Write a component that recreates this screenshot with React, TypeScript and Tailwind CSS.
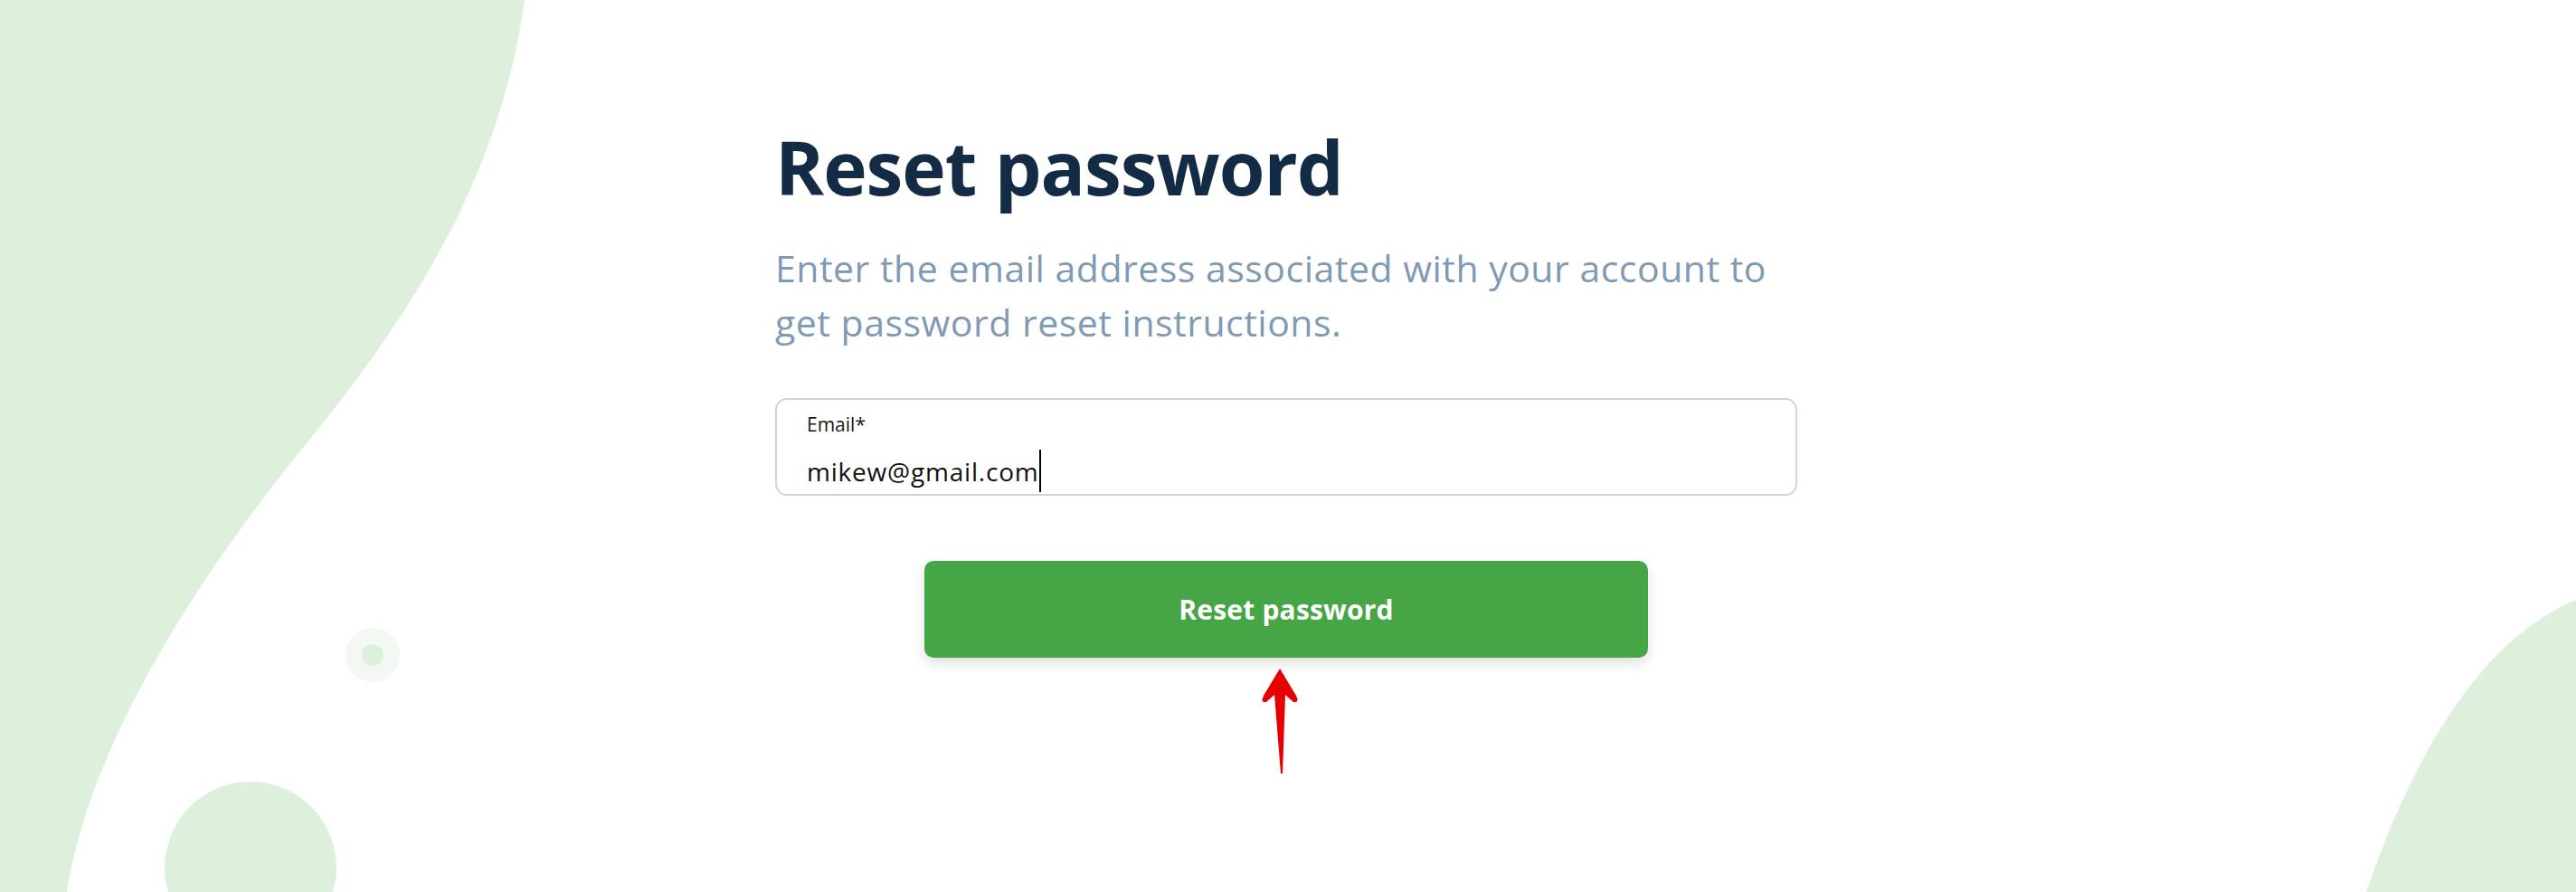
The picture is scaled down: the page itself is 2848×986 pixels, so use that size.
import React from "react";

export default function App() {
  return (
    <div className="relative w-full h-[986px] overflow-hidden bg-white" style={{ fontFamily: "'Open Sans', Lato, sans-serif" }}>
      <svg className="absolute inset-0 w-full h-full" viewBox="0 0 2848 986" preserveAspectRatio="none">
        <path d="M0 0 L580 0 C555 180 470 330 339 490 C221 634 100 820 74 986 L0 986 Z" fill="#dcf0dc" />
        <path d="M2848 663 C2760 700 2680 800 2616 986 L2848 986 Z" fill="#dcf0dc" />
        <circle cx="412" cy="724" r="30" fill="#f2f9f2" />
        <circle cx="412" cy="724" r="12" fill="#dcf0dc" />
        <circle cx="277" cy="959" r="95" fill="#dcf0dc" />
      </svg>

      <div className="relative ml-[857px] w-[1130px] pt-[142px] flex flex-col">
        <h1 className="text-[82px] leading-[84px] font-bold text-[#132b45] tracking-[-1px]">
          Reset password
        </h1>
        <p className="mt-[40px] text-[41px] leading-[60px] text-[#7f9ab4] tracking-[0.5px]">
          Enter the email address associated with your account to
          <br />
          get password reset instructions.
        </p>
        <div className="mt-[54px] h-[108px] rounded-[13px] border-2 border-[#d4d4d4] bg-white pl-[33px] pt-[15px] flex flex-col">
          <div className="text-[21px] leading-[25px] text-[#1a1a1a]">Email*</div>
          <div className="mt-[15px] flex items-center text-[28px] leading-[34px] text-[#111] tracking-[0.8px]">
            <span>mikew@gmail.com</span>
            <span className="inline-block w-[2px] h-[47px] bg-black" />
          </div>
        </div>
        <div className="mt-[72px] flex justify-center">
          <button className="w-[800px] h-[107px] rounded-[10px] bg-[#46a544] text-white text-[30px] font-bold tracking-[0.2px] shadow-[0_6px_14px_rgba(0,0,0,0.13)]">
            Reset password
          </button>
        </div>
      </div>

      <svg className="absolute inset-0 w-full h-full pointer-events-none" viewBox="0 0 2848 986" preserveAspectRatio="none">
        <path
          d="M1415 739 L1433 769 Q1437 777 1430 776 L1421 768 L1418 855 L1416 855 L1409 768 L1400 776 Q1393 777 1397 769 Z"
          fill="#e60000"
        />
      </svg>
    </div>
  );
}
